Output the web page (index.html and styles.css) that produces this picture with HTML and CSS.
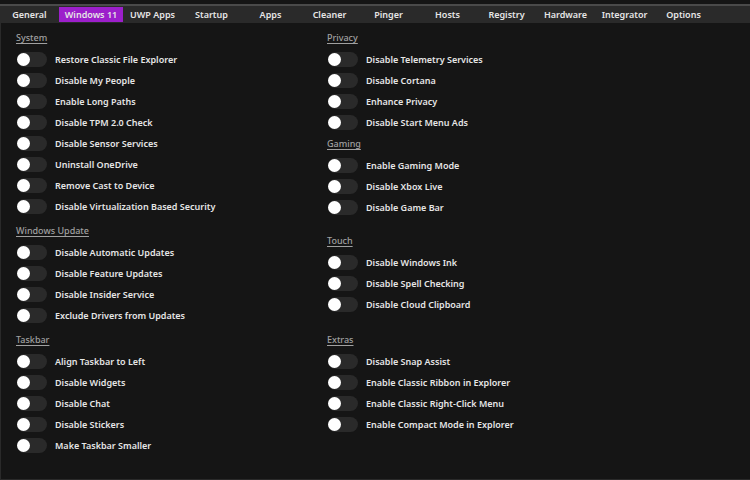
FILE: index.html
```html
<!DOCTYPE html>
<html lang="en">
<head>
<meta charset="utf-8">
<title>Windows 11 options</title>
<link rel="stylesheet" href="styles.css">
</head>
<body>
<nav class="tabs">
<button class="tab">General</button>
<button class="tab tab-active">Windows 11</button>
<button class="tab">UWP Apps</button>
<button class="tab">Startup</button>
<button class="tab">Apps</button>
<button class="tab">Cleaner</button>
<button class="tab">Pinger</button>
<button class="tab">Hosts</button>
<button class="tab">Registry</button>
<button class="tab">Hardware</button>
<button class="tab">Integrator</button>
<button class="tab">Options</button>
</nav>
<main class="panel">
<div class="column">
<section class="group">
<h2>System</h2>
<label class="option"><input type="checkbox" class="switch">Restore Classic File Explorer</label>
<label class="option"><input type="checkbox" class="switch">Disable My People</label>
<label class="option"><input type="checkbox" class="switch">Enable Long Paths</label>
<label class="option"><input type="checkbox" class="switch">Disable TPM 2.0 Check</label>
<label class="option"><input type="checkbox" class="switch">Disable Sensor Services</label>
<label class="option"><input type="checkbox" class="switch">Uninstall OneDrive</label>
<label class="option"><input type="checkbox" class="switch">Remove Cast to Device</label>
<label class="option"><input type="checkbox" class="switch">Disable Virtualization Based Security</label>
</section>
<section class="group group-near">
<h2>Windows Update</h2>
<label class="option"><input type="checkbox" class="switch">Disable Automatic Updates</label>
<label class="option"><input type="checkbox" class="switch">Disable Feature Updates</label>
<label class="option"><input type="checkbox" class="switch">Disable Insider Service</label>
<label class="option"><input type="checkbox" class="switch">Exclude Drivers from Updates</label>
</section>
<section class="group group-near">
<h2>Taskbar</h2>
<label class="option"><input type="checkbox" class="switch">Align Taskbar to Left</label>
<label class="option"><input type="checkbox" class="switch">Disable Widgets</label>
<label class="option"><input type="checkbox" class="switch">Disable Chat</label>
<label class="option"><input type="checkbox" class="switch">Disable Stickers</label>
<label class="option"><input type="checkbox" class="switch">Make Taskbar Smaller</label>
</section>
</div>
<div class="column">
<section class="group">
<h2>Privacy</h2>
<label class="option"><input type="checkbox" class="switch">Disable Telemetry Services</label>
<label class="option"><input type="checkbox" class="switch">Disable Cortana</label>
<label class="option"><input type="checkbox" class="switch">Enhance Privacy</label>
<label class="option"><input type="checkbox" class="switch">Disable Start Menu Ads</label>
</section>
<section class="group">
<h2>Gaming</h2>
<label class="option"><input type="checkbox" class="switch">Enable Gaming Mode</label>
<label class="option"><input type="checkbox" class="switch">Disable Xbox Live</label>
<label class="option"><input type="checkbox" class="switch">Disable Game Bar</label>
</section>
<section class="group group-far">
<h2>Touch</h2>
<label class="option"><input type="checkbox" class="switch">Disable Windows Ink</label>
<label class="option"><input type="checkbox" class="switch">Disable Spell Checking</label>
<label class="option"><input type="checkbox" class="switch">Disable Cloud Clipboard</label>
</section>
<section class="group group-last">
<h2>Extras</h2>
<label class="option"><input type="checkbox" class="switch">Disable Snap Assist</label>
<label class="option"><input type="checkbox" class="switch">Enable Classic Ribbon in Explorer</label>
<label class="option"><input type="checkbox" class="switch">Enable Classic Right-Click Menu</label>
<label class="option"><input type="checkbox" class="switch">Enable Compact Mode in Explorer</label>
</section>
</div>
</main>
</body>
</html>
```
FILE: styles.css
```css
* {
  box-sizing: border-box;
}

body {
  margin: 0;
  padding-top: 4px;
  min-height: 100vh;
  display: flex;
  flex-direction: column;
  background: #151515;
  color: #e6e6e6;
  font: 600 9px/21px "Noto Sans", "Open Sans", sans-serif;
}

.tabs {
  display: flex;
  padding-top: 1px;
  padding-bottom: 1px;
  border-top: 2px solid #4a4a4a;
  background: #2a2a2a;
}

.tab {
  width: 59px;
  height: 15px;
  padding: 0;
  border: 0;
  background: none;
  color: inherit;
  font: inherit;
  line-height: 15px;
  white-space: nowrap;
}

.tab-active {
  width: 64px;
  background: #9c1fcb;
}

.panel {
  flex: 1;
  display: grid;
  grid-template-columns: 311px 1fr;
  padding: 4px 0 4px 15px;
  border-left: 1px solid #2a2a2a;
  border-bottom: 1px solid #2a2a2a;
}

.group-near {
  margin-top: 3px;
}

.group-far {
  margin-top: 12px;
}

.group-last {
  margin-top: 14px;
}

h2 {
  margin: 0;
  color: #a0a0a0;
  font-size: 9px;
  font-weight: 500;
  line-height: 22px;
  text-decoration: underline;
  text-underline-offset: 2px;
}

.option {
  display: flex;
  align-items: center;
  gap: 8px;
  height: 21px;
}

.switch {
  appearance: none;
  flex: none;
  width: 30px;
  height: 15px;
  margin: 0 0 0 1px;
  padding: 1px 0;
  border-radius: 8px;
  background: #2a2a2a;
}

.switch::before {
  content: "";
  display: block;
  width: 13px;
  height: 13px;
  border-radius: 50%;
  background: #fff;
}

.switch:checked {
  background: #9c1fcb;
}

.switch:checked::before {
  margin-left: auto;
}
```
